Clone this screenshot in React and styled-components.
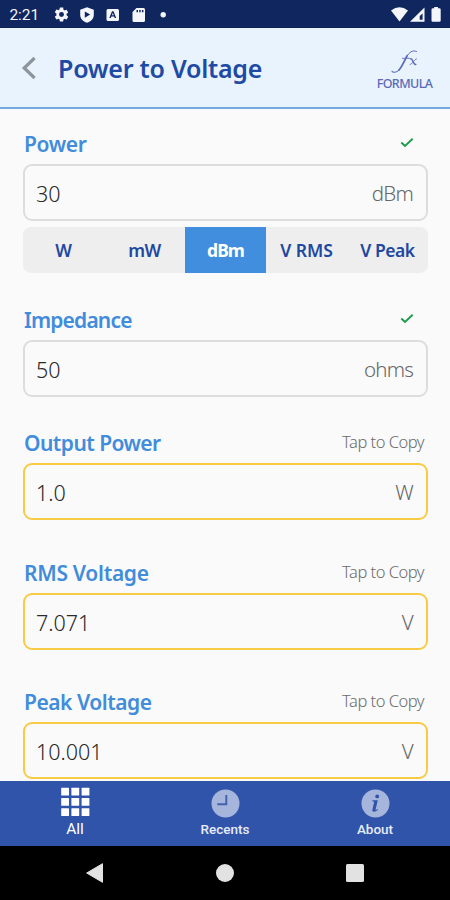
import React from 'react';
import styled, { createGlobalStyle } from 'styled-components';

const GlobalStyle = createGlobalStyle`
  * { box-sizing: border-box; }
  body { margin: 0; background: #fafafa; }
  button { font: inherit; border: 0; padding: 0; background: none; }
`;

const Screen = styled.div`
  width: 450px;
  height: 900px;
  display: flex;
  flex-direction: column;
  overflow: hidden;
  background: #fafafa;
  font-family: 'Noto Sans', sans-serif;
`;

const StatusBar = styled.div`
  flex: none;
  height: 28px;
  display: flex;
  justify-content: space-between;
  background: #10265f;
  border-bottom: 1px solid #0e2150;
  color: #f4f6fb;
`;

const StatusText = styled.span`
  width: 44px;
  padding: 6px 0 0 9.5px;
  font: 400 15.5px/18px Roboto, sans-serif;
  letter-spacing: -0.1px;
`;

const StatusGroup = styled.div`
  display: flex;
`;

const Header = styled.header`
  flex: none;
  height: 81px;
  display: flex;
  align-items: center;
  background: #e8f3fe;
  border-bottom: 2px solid #75a9e0;
  padding: 0 16px 0 21px;
`;

const BackButton = styled.button`
  display: flex;
  width: 37px;
`;

const Title = styled.h1`
  flex: 1;
  margin: 0;
  font-size: 25px;
  line-height: 34px;
  font-weight: 600;
  letter-spacing: -0.24px;
  color: #1f4aa4;
`;

const FormulaButton = styled.button`
  display: flex;
  flex-direction: column;
  align-items: center;
  width: 59px;
  padding-top: 5px;
  color: #5b69b5;
  font-size: 12.5px;
  line-height: 17px;
  font-weight: 500;
  letter-spacing: -0.6px;
`;

const Form = styled.main`
  flex: 1;
  min-height: 0;
  overflow: hidden;
  padding: 20px 22px 0 23px;
`;

const Field = styled.section`
  margin-bottom: ${(p) => p.$gap}px;
`;

const LabelRow = styled.div`
  height: 35px;
  display: flex;
  align-items: flex-start;
  justify-content: space-between;
  padding: 0 4px 0 1px;
`;

const Label = styled.label`
  font-size: 21px;
  line-height: 30px;
  font-weight: 600;
  letter-spacing: ${(p) => p.$track}px;
  color: #418cdb;
`;

const Hint = styled.span`
  font-size: 16.5px;
  line-height: 28px;
  font-weight: 350;
  letter-spacing: -0.5px;
  color: #6c6c6c;
`;

const CheckSlot = styled.span`
  display: flex;
  padding: 8px 10px 0 0;
`;

const ValueBox = styled.div`
  height: 57px;
  display: flex;
  align-items: center;
  justify-content: space-between;
  border: 2px solid ${(p) => (p.$output ? '#f8cb45' : '#dddddd')};
  border-radius: 9px;
  padding: 1px 13px 0 11px;
`;

const Value = styled.span`
  font-size: 21.5px;
  font-weight: 350;
  color: #2a2a2a;
`;

const Unit = styled.span`
  font-size: 20.5px;
  font-weight: 350;
  letter-spacing: -0.8px;
  color: #666;
`;

const Segments = styled.div`
  height: 46px;
  margin-top: 6px;
  display: grid;
  grid-template-columns: repeat(5, 1fr);
  border-radius: 8px;
  overflow: hidden;
  background: #eeeeee;
`;

const Segment = styled.button`
  font-size: 17.5px;
  line-height: 24px;
  font-weight: ${(p) => (p.$active ? 700 : 600)};
  letter-spacing: ${(p) => p.$track}px;
  color: ${(p) => (p.$active ? '#fff' : '#2148a0')};
  background: ${(p) => (p.$active ? '#428ede' : 'transparent')};
`;

const TabBar = styled.nav`
  flex: none;
  height: 65px;
  display: grid;
  grid-template-columns: repeat(3, 1fr);
  background: #3054a9;
`;

const Tab = styled.button`
  display: flex;
  flex-direction: column;
  align-items: center;
  padding-top: ${(p) => (p.$active ? 6 : 8)}px;
  gap: ${(p) => (p.$active ? 3 : 2)}px;
  color: ${(p) => (p.$active ? '#fff' : '#e6ebf7')};
  font: ${(p) => (p.$active ? '400 15.5px' : '500 13.5px')} / 18px Roboto, sans-serif;
`;

const SystemNav = styled.div`
  flex: none;
  height: 54px;
  background: #000;
  display: flex;
  align-items: center;
  justify-content: space-between;
  padding: 0 86px 0 86px;
`;

const SettingsIcon = () => (
  <svg width="17" height="17" viewBox="0 0 24 24" fill="currentColor">
    <path d="M19.14 12.94c.04-.3.06-.61.06-.94s-.02-.64-.07-.94l2.03-1.58a.49.49 0 0 0 .12-.61l-1.92-3.32a.49.49 0 0 0-.59-.22l-2.39.96a7 7 0 0 0-1.62-.94l-.36-2.54A.48.48 0 0 0 13.92 2h-3.84a.48.48 0 0 0-.48.41l-.36 2.54c-.59.24-1.13.57-1.62.94l-2.39-.96a.48.48 0 0 0-.59.22L2.73 8.47a.48.48 0 0 0 .12.61l2.03 1.58a7.3 7.3 0 0 0 0 2.68l-2.03 1.58a.49.49 0 0 0-.12.61l1.92 3.32c.12.22.37.29.59.22l2.39-.96c.5.38 1.03.7 1.62.94l.36 2.54c.05.24.24.41.48.41h3.84c.24 0 .44-.17.48-.41l.36-2.54a7 7 0 0 0 1.62-.94l2.39.96c.22.08.47 0 .59-.22l1.92-3.32a.48.48 0 0 0-.12-.61zM12 15.5a3.5 3.5 0 1 1 0-7 3.5 3.5 0 0 1 0 7z" />
  </svg>
);

const StatusIcons = () => (
  <svg width="114" height="16" viewBox="0 0 114 16" fill="currentColor">
    <path fillRule="evenodd" d="M7 0.2 13.8 2.8V8c0 3.5-2.8 6.5-6.8 7.8C3 14.5.2 11.5.2 8V2.8zM4.8 4.4v6.400l5.400-3.200z" />
    <path fillRule="evenodd" d="M28 2h9.500q1.500 0 1.500 1.500V12.500q0 1.500-1.500 1.500H28q-1.500 0-1.500-1.500V3.500Q26.500 2 28 2zM32 4.200 29.300 11h1.500l.6-1.600h2.700l.6 1.600h1.500L33.500 4.200zm.8 1.800.9 2.200h-1.800z" />
    <path fillRule="evenodd" d="M56.500 1H63.500Q65 1 65 2.500V13.500Q65 15 63.500 15H54Q52.500 15 52.500 13.500V5zM56.500 3v2.200H58V3zM59.200 3v2.200h1.500V3zM61.900 3v2.200h1.500V3z" />
    <circle cx="83.200" cy="7.700" r="2.700" />
  </svg>
);

const SignalIcons = () => (
  <svg width="52" height="16" viewBox="0 0 52 16" fill="currentColor">
    <path d="M0 3.500Q8.500-2.800 17 3.500L8.500 14.500z" />
    <path fillRule="evenodd" d="M33.500.5V14.800H19zM31.600 6.500v6.300h-2.900V9z" />
    <path d="M43.200 0h3.800v1.300h1.400q1.300 0 1.300 1.300V13.500q0 1.300-1.300 1.300h-6.600q-1.300 0-1.300-1.300V2.600q0-1.300 1.300-1.300h1.400z" />
  </svg>
);

const StatusIconSlot = styled.div`
  display: flex;
  padding: ${(p) => p.$top}px ${(p) => p.$right || 0}px 0 ${(p) => p.$left || 0}px;
`;

const BackIcon = () => (
  <svg width="16" height="24" viewBox="0 0 16 24" fill="none" stroke="#8e9499" strokeWidth="3.200">
    <path d="M13.600 2 3.200 12l10.400 10" />
  </svg>
);

const FormulaIcon = () => (
  <svg width="30" height="26" viewBox="0 0 30 26" fill="none" stroke="currentColor" strokeLinecap="round">
    <path strokeWidth="1.100" d="M2 22.200c.6 1.600 4.300 1.700 7-1.200" />
    <path strokeWidth="1.700" d="M9 21c2.500-2.500 5.700-9.500 8-14" />
    <path strokeWidth="1" d="M17 7c2-3.300 5.500-6.500 9.500-4.500" />
    <path strokeWidth=".9" d="M12.500 9.300h7" />
    <path strokeWidth="1.500" d="M20.800 9.800c2-.6 2.200 6.200 5 5.600" />
    <path strokeWidth=".9" d="M26.500 9.800c-1.800-.3-4.200 6-6.300 5.600" />
  </svg>
);

const CheckIcon = () => (
  <svg width="14" height="11" viewBox="0 0 14 11" fill="none" stroke="#1e9a4c" strokeWidth="1.900">
    <path d="M1.300 5.500 5 9l7.700-7.300" />
  </svg>
);

const GridIcon = () => (
  <svg width="30" height="30" viewBox="0 0 30 30" fill="#fff">
    {[0.8, 11, 21.2].map((y) =>
      [1.2, 11.400, 21.600].map((x) => <rect key={`${x}-${y}`} x={x} y={y} width="7.800" height="7.800" rx=".5" />)
    )}
  </svg>
);

const ClockIcon = () => (
  <svg width="29" height="29" viewBox="0 0 29 29">
    <circle cx="14.500" cy="14.500" r="14" fill="#a6b5dc" />
    <path d="M15.300 6v9.200H6.300" fill="none" stroke="#4361ae" strokeWidth="1.900" />
  </svg>
);

const InfoIcon = () => (
  <svg width="29" height="29" viewBox="0 0 29 29">
    <circle cx="14.500" cy="14.500" r="14" fill="#a6b5dc" />
    <circle cx="16.200" cy="7.400" r="1.900" fill="#3054a9" />
    <path d="M11.500 11.300h5.300l-2.200 9.200q-.3 1.300 2.200-.4l.3.700c-2.500 2.200-6.500 3-5.700-.3l1.700-7.200q.2-1-1.800-1z" fill="#3054a9" />
  </svg>
);

const NavBackIcon = () => (
  <svg width="18" height="20" viewBox="0 0 18 20" fill="#e2e2e2">
    <path d="M16.500.7v18.600L.7 10z" stroke="#e2e2e2" strokeLinejoin="round" />
  </svg>
);

const NavHome = styled.span`
  width: 18px;
  height: 18px;
  border-radius: 50%;
  background: #e2e2e2;
`;

const NavOverview = styled.span`
  width: 18px;
  height: 18px;
  border-radius: 1.5px;
  background: #e2e2e2;
`;

const units = [
  { name: 'W', track: 0 },
  { name: 'mW', track: -0.5 },
  { name: 'dBm', track: -0.9 },
  { name: 'V RMS', track: 0 },
  { name: 'V Peak', track: -0.45 },
];

const outputs = [
  { label: 'Output Power', track: -0.55, value: '1.0', unit: 'W', gap: 38 },
  { label: 'RMS Voltage', track: -0.3, value: '7.071', unit: 'V', gap: 37 },
  { label: 'Peak Voltage', track: -0.48, value: '10.001', unit: 'V', gap: 0 },
];

export default function App() {
  return (
    <Screen>
      <GlobalStyle />
      <StatusBar>
        <StatusGroup>
          <StatusText>2:21</StatusText>
          <StatusIconSlot $top={6} $left={9}>
            <SettingsIcon />
          </StatusIconSlot>
          <StatusIconSlot $top={6.5} $left={9.5}>
            <StatusIcons />
          </StatusIconSlot>
        </StatusGroup>
        <StatusIconSlot $top={6.5} $right={7}>
          <SignalIcons />
        </StatusIconSlot>
      </StatusBar>
      <Header>
        <BackButton aria-label="Back">
          <BackIcon />
        </BackButton>
        <Title>Power to Voltage</Title>
        <FormulaButton>
          <FormulaIcon />
          FORMULA
        </FormulaButton>
      </Header>
      <Form>
        <Field $gap={32}>
          <LabelRow>
            <Label $track={-0.35}>Power</Label>
            <CheckSlot><CheckIcon /></CheckSlot>
          </LabelRow>
          <ValueBox>
            <Value>30</Value>
            <Unit>dBm</Unit>
          </ValueBox>
          <Segments>
            {units.map((u) => (
              <Segment key={u.name} $active={u.name === 'dBm'} $track={u.track}>{u.name}</Segment>
            ))}
          </Segments>
        </Field>
        <Field $gap={31}>
          <LabelRow>
            <Label $track={-0.82}>Impedance</Label>
            <CheckSlot><CheckIcon /></CheckSlot>
          </LabelRow>
          <ValueBox>
            <Value>50</Value>
            <Unit>ohms</Unit>
          </ValueBox>
        </Field>
        {outputs.map((o) => (
          <Field key={o.label} $gap={o.gap}>
            <LabelRow>
              <Label $track={o.track}>{o.label}</Label>
              <Hint>Tap to Copy</Hint>
            </LabelRow>
            <ValueBox $output>
              <Value>{o.value}</Value>
              <Unit>{o.unit}</Unit>
            </ValueBox>
          </Field>
        ))}
      </Form>
      <TabBar>
        <Tab $active>
          <GridIcon />
          All
        </Tab>
        <Tab>
          <ClockIcon />
          Recents
        </Tab>
        <Tab>
          <InfoIcon />
          About
        </Tab>
      </TabBar>
      <SystemNav>
        <NavBackIcon />
        <NavHome />
        <NavOverview />
      </SystemNav>
    </Screen>
  );
}
